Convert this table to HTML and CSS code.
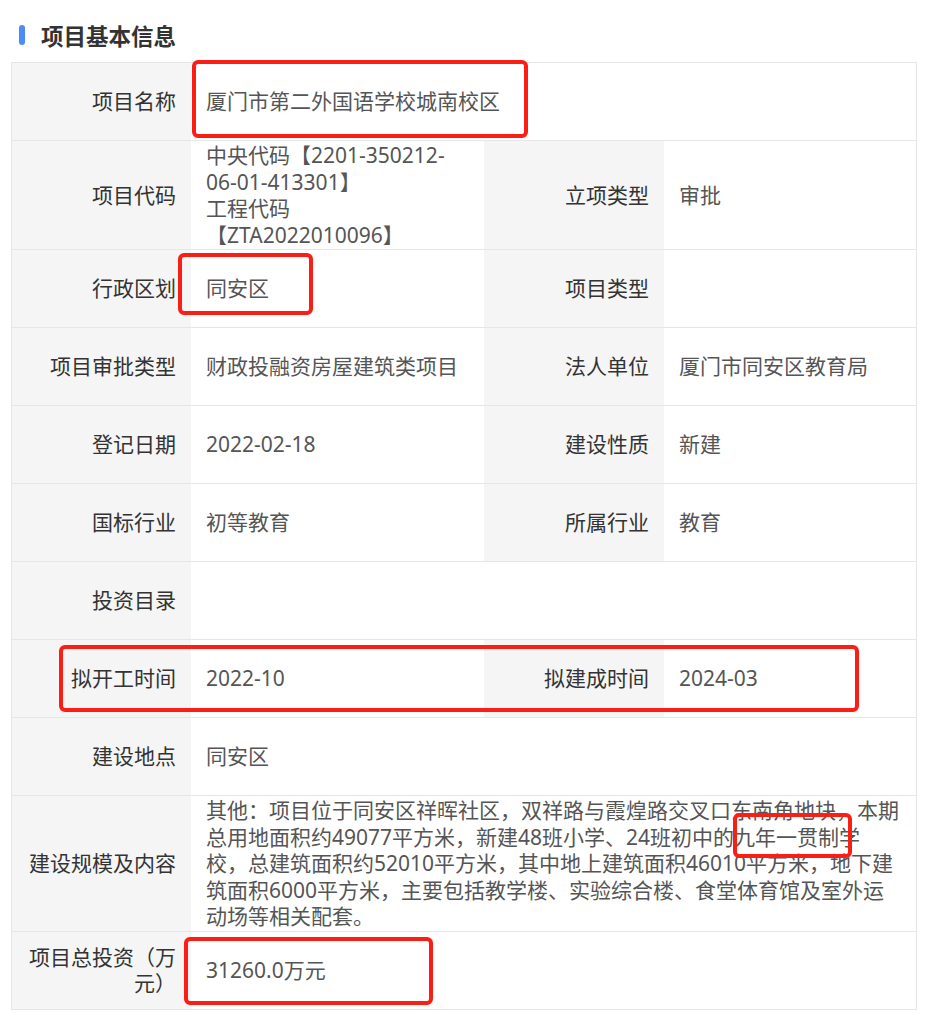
FILE: index.html
```html
<!DOCTYPE html>
<html>
<head>
  <meta charset="UTF-8">
  <title>项目基本信息</title>
  <link rel="stylesheet" href="styles.css">
</head>
<body>
  <div class="page">
    <h2 class="section-title"><span class="bar"></span>项目基本信息</h2>

    <div class="info-grid">
      <div class="cell label">项目名称</div>
      <div class="cell value wide">厦门市第二外国语学校城南校区</div>

      <div class="cell label">项目代码</div>
      <div class="cell value">
        <div>中央代码【2201-350212-<br>06-01-413301】<br>工程代码<br>【ZTA2022010096】</div>
      </div>
      <div class="cell label">立项类型</div>
      <div class="cell value">审批</div>

      <div class="cell label">行政区划</div>
      <div class="cell value">同安区</div>
      <div class="cell label">项目类型</div>
      <div class="cell value"></div>

      <div class="cell label">项目审批类型</div>
      <div class="cell value">财政投融资房屋建筑类项目</div>
      <div class="cell label">法人单位</div>
      <div class="cell value">厦门市同安区教育局</div>

      <div class="cell label">登记日期</div>
      <div class="cell value">2022-02-18</div>
      <div class="cell label">建设性质</div>
      <div class="cell value">新建</div>

      <div class="cell label">国标行业</div>
      <div class="cell value">初等教育</div>
      <div class="cell label">所属行业</div>
      <div class="cell value">教育</div>

      <div class="cell label">投资目录</div>
      <div class="cell value wide"></div>

      <div class="cell label">拟开工时间</div>
      <div class="cell value">2022-10</div>
      <div class="cell label">拟建成时间</div>
      <div class="cell value">2024-03</div>

      <div class="cell label">建设地点</div>
      <div class="cell value wide">同安区</div>

      <div class="cell label">建设规模及内容</div>
      <div class="cell value wide">
        <div>其他：项目位于同安区祥晖社区，双祥路与霞煌路交叉口东南角地块，本期总用地面积约49077平方米，新建48班小学、24班初中的九年一贯制学校，总建筑面积约52010平方米，其中地上建筑面积46010平方米，地下建筑面积6000平方米，主要包括教学楼、实验综合楼、食堂体育馆及室外运动场等相关配套。</div>
      </div>

      <div class="cell label">项目总投资（万元）</div>
      <div class="cell value wide">31260.0万元</div>
    </div>

    <!-- annotation marks drawn over the table -->
    <div class="mark mark-name"></div>
    <div class="mark mark-district"></div>
    <div class="mark mark-dates"></div>
    <div class="mark mark-grade"></div>
    <div class="mark mark-total"></div>
  </div>
</body>
</html>
```

FILE: styles.css
```css
body {
  margin: 0;
  background: #fff;
  font-family: "Noto Sans", "Noto Sans CJK SC", sans-serif;
}
.page {
  position: relative;
  padding: 20px 0 0 11px;
}
.section-title {
  display: flex;
  align-items: center;
  margin: 0 0 12px 8px;
  height: 30px;
  font-size: 22.5px;
  font-weight: bold;
  color: #333;
}
.bar {
  width: 6px;
  height: 20px;
  border-radius: 3px;
  background: #4b8cf6;
  margin-right: 16px;
}
.info-grid {
  display: grid;
  grid-template-columns: 179px 293px 180px 252px;
  width: 904px;
  border: 1px solid #e6e6e6;
  border-bottom: none;
  font-size: 21px;
  line-height: 26.5px;
}
.cell {
  display: flex;
  align-items: center;
  box-sizing: border-box;
  min-height: 78px;
  padding: 1px 15px;
  border-bottom: 1px solid #e6e6e6;
}
.label {
  justify-content: flex-end;
  text-align: right;
  background: #f5f5f5;
  color: #333;
}
.value {
  color: #555;
}
.wide {
  grid-column: span 3;
}
.mark {
  position: absolute;
  box-sizing: border-box;
  border: 4px solid #fa1e14;
  border-radius: 6px;
}
.mark-name {
  left: 192px;
  top: 60px;
  width: 336px;
  height: 78px;
}
.mark-district {
  left: 178px;
  top: 253px;
  width: 135px;
  height: 62px;
}
.mark-dates {
  left: 59px;
  top: 645px;
  width: 800px;
  height: 67px;
}
.mark-grade {
  left: 733px;
  top: 813px;
  width: 119px;
  height: 45px;
}
.mark-total {
  left: 184px;
  top: 937px;
  width: 249px;
  height: 68px;
}
```
